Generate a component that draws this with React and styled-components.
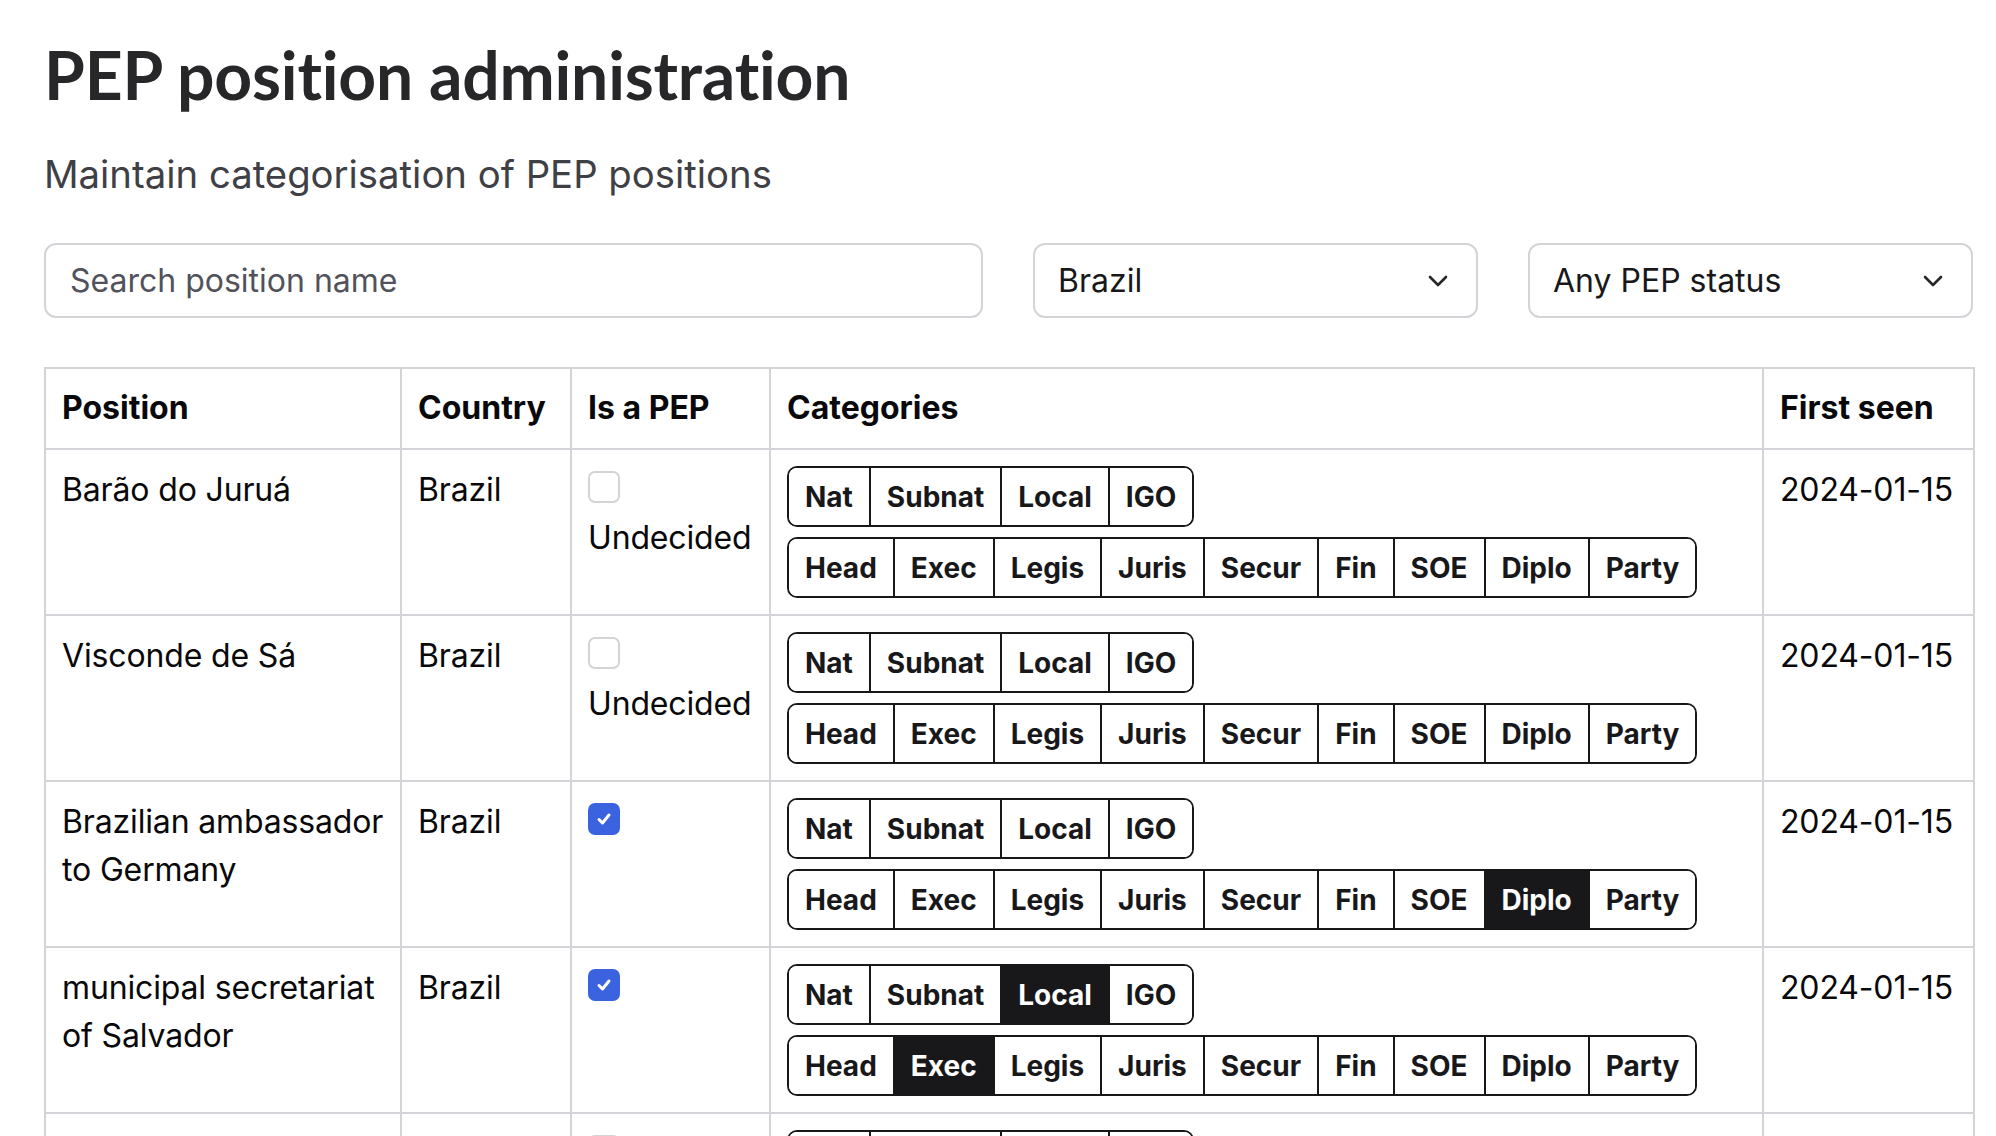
import React from "react";
import styled, { createGlobalStyle, css } from "styled-components";

const GlobalStyle = createGlobalStyle`
  html, body { margin: 0; padding: 0; background: #ffffff; }
  body { font-family: Inter, "Liberation Sans", sans-serif; color: #09090b; }
  * { box-sizing: border-box; }
`;

const Page = styled.main`
  width: 1973px;
  padding: 35px 0 0 44px;
`;

const Title = styled.h1`
  margin: 0;
  font-family: Lato, Inter, sans-serif;
  font-weight: 700;
  font-size: 66px;
  line-height: 1.2;
  color: #27272a;
  letter-spacing: -0.2px;
`;

const Subtitle = styled.p`
  margin: 38px 0 0;
  font-size: 38.3px;
  line-height: 1.2;
  color: #3f3f46;
`;

const Filters = styled.div`
  display: grid;
  grid-template-columns: 1fr 445px 445px;
  column-gap: 50px;
  margin-top: 45px;
`;

const fieldBase = css`
  height: 75px;
  border: 2px solid #d4d4d8;
  border-radius: 12px;
  background: #fff;
  font-family: Inter, sans-serif;
  font-size: 32px;
  display: flex;
  align-items: center;
`;

const SearchBox = styled.div`
  ${fieldBase};
  padding: 0 24px;
  color: #52525b;
`;

const Select = styled.div`
  ${fieldBase};
  padding: 0 28px 0 23px;
  justify-content: space-between;
  color: #18181b;
`;

const Table = styled.table`
  margin-top: 49px;
  width: 1929px;
  border-collapse: collapse;
  table-layout: fixed;
  border: 2px solid #d4d4d8;
`;

const Th = styled.th`
  text-align: left;
  font-weight: 700;
  font-size: 32px;
  line-height: 48px;
  padding: 15px 12px 16px 16px;
  border: 2px solid #d4d4d8;
  color: #09090b;
`;

const Td = styled.td`
  vertical-align: top;
  font-size: 32px;
  line-height: 48px;
  padding: 16px 12px 16px 16px;
  border: 2px solid #d4d4d8;
  color: #09090b;
  letter-spacing: -0.15px;
`;

const Check = styled.span`
  display: inline-flex;
  align-items: center;
  justify-content: center;
  width: 32px;
  height: 32px;
  vertical-align: middle;
  border-radius: 7px;
  border: 2px solid ${(p) => (p.$on ? "#3b63e0" : "#d4d4d8")};
  background: ${(p) => (p.$on ? "#3b63e0" : "#fff")};
  position: relative;
  top: -5px;
`;

const Groups = styled.div`
  display: flex;
  flex-direction: column;
  align-items: flex-start;
  gap: 10px;
`;

const Group = styled.div`
  display: inline-flex;
  border: 2px solid #18181b;
  border-radius: 10px;
  overflow: hidden;
`;

const CatButton = styled.span`
  display: inline-flex;
  align-items: center;
  height: 57px;
  padding: 0 16px;
  font-weight: 700;
  font-size: 28px;
  letter-spacing: 0;
  background: ${(p) => (p.$active ? "#18181b" : "#fff")};
  color: ${(p) => (p.$active ? "#fff" : "#18181b")};
  & + & { border-left: 2px solid #18181b; }
`;

const Chevron = () => (
  <svg width="20" height="12" viewBox="0 0 20 12" fill="none">
    <polyline points="2,2 10,10 18,2" stroke="#27272a" strokeWidth="2.6" strokeLinecap="round" strokeLinejoin="round" />
  </svg>
);

const CheckMark = () => (
  <svg width="18" height="18" viewBox="0 0 18 18" fill="none">
    <polyline points="4,9.5 7.5,13 14,5" stroke="#fff" strokeWidth="3" strokeLinecap="round" strokeLinejoin="round" />
  </svg>
);

const LEVELS = ["Nat", "Subnat", "Local", "IGO"];
const KINDS = ["Head", "Exec", "Legis", "Juris", "Secur", "Fin", "SOE", "Diplo", "Party"];

const rows = [
  { name: "Barão do Juruá", pep: false, active: [] },
  { name: "Visconde de Sá", pep: false, active: [] },
  { name: "Brazilian ambassador to Germany", pep: true, active: ["Diplo"] },
  { name: "municipal secretariat of Salvador", pep: true, active: ["Local", "Exec"] },
  { name: "Barão de Cotegipe", pep: false, active: [] },
];

export default function App() {
  return (
    <>
      <GlobalStyle />
      <Page>
        <Title>PEP position administration</Title>
        <Subtitle>Maintain categorisation of PEP positions</Subtitle>
        <Filters>
          <SearchBox>Search position name</SearchBox>
          <Select>
            <span>Brazil</span>
            <Chevron />
          </Select>
          <Select>
            <span>Any PEP status</span>
            <Chevron />
          </Select>
        </Filters>
        <Table>
          <colgroup>
            <col style={{ width: 356 }} />
            <col style={{ width: 170 }} />
            <col style={{ width: 199 }} />
            <col style={{ width: 993 }} />
            <col style={{ width: 211 }} />
          </colgroup>
          <thead>
            <tr>
              <Th>Position</Th>
              <Th>Country</Th>
              <Th>Is a PEP</Th>
              <Th>Categories</Th>
              <Th>First seen</Th>
            </tr>
          </thead>
          <tbody>
            {rows.map((r) => (
              <tr key={r.name}>
                <Td>{r.name}</Td>
                <Td>Brazil</Td>
                <Td>
                  <Check $on={r.pep}>{r.pep && <CheckMark />}</Check>
                  {!r.pep && (
                    <>
                      <br />
                      Undecided
                    </>
                  )}
                </Td>
                <Td>
                  <Groups>
                    <Group>
                      {LEVELS.map((l) => (
                        <CatButton key={l} $active={r.active.includes(l)}>{l}</CatButton>
                      ))}
                    </Group>
                    <Group>
                      {KINDS.map((k) => (
                        <CatButton key={k} $active={r.active.includes(k)}>{k}</CatButton>
                      ))}
                    </Group>
                  </Groups>
                </Td>
                <Td>2024-01-15</Td>
              </tr>
            ))}
          </tbody>
        </Table>
      </Page>
    </>
  );
}
